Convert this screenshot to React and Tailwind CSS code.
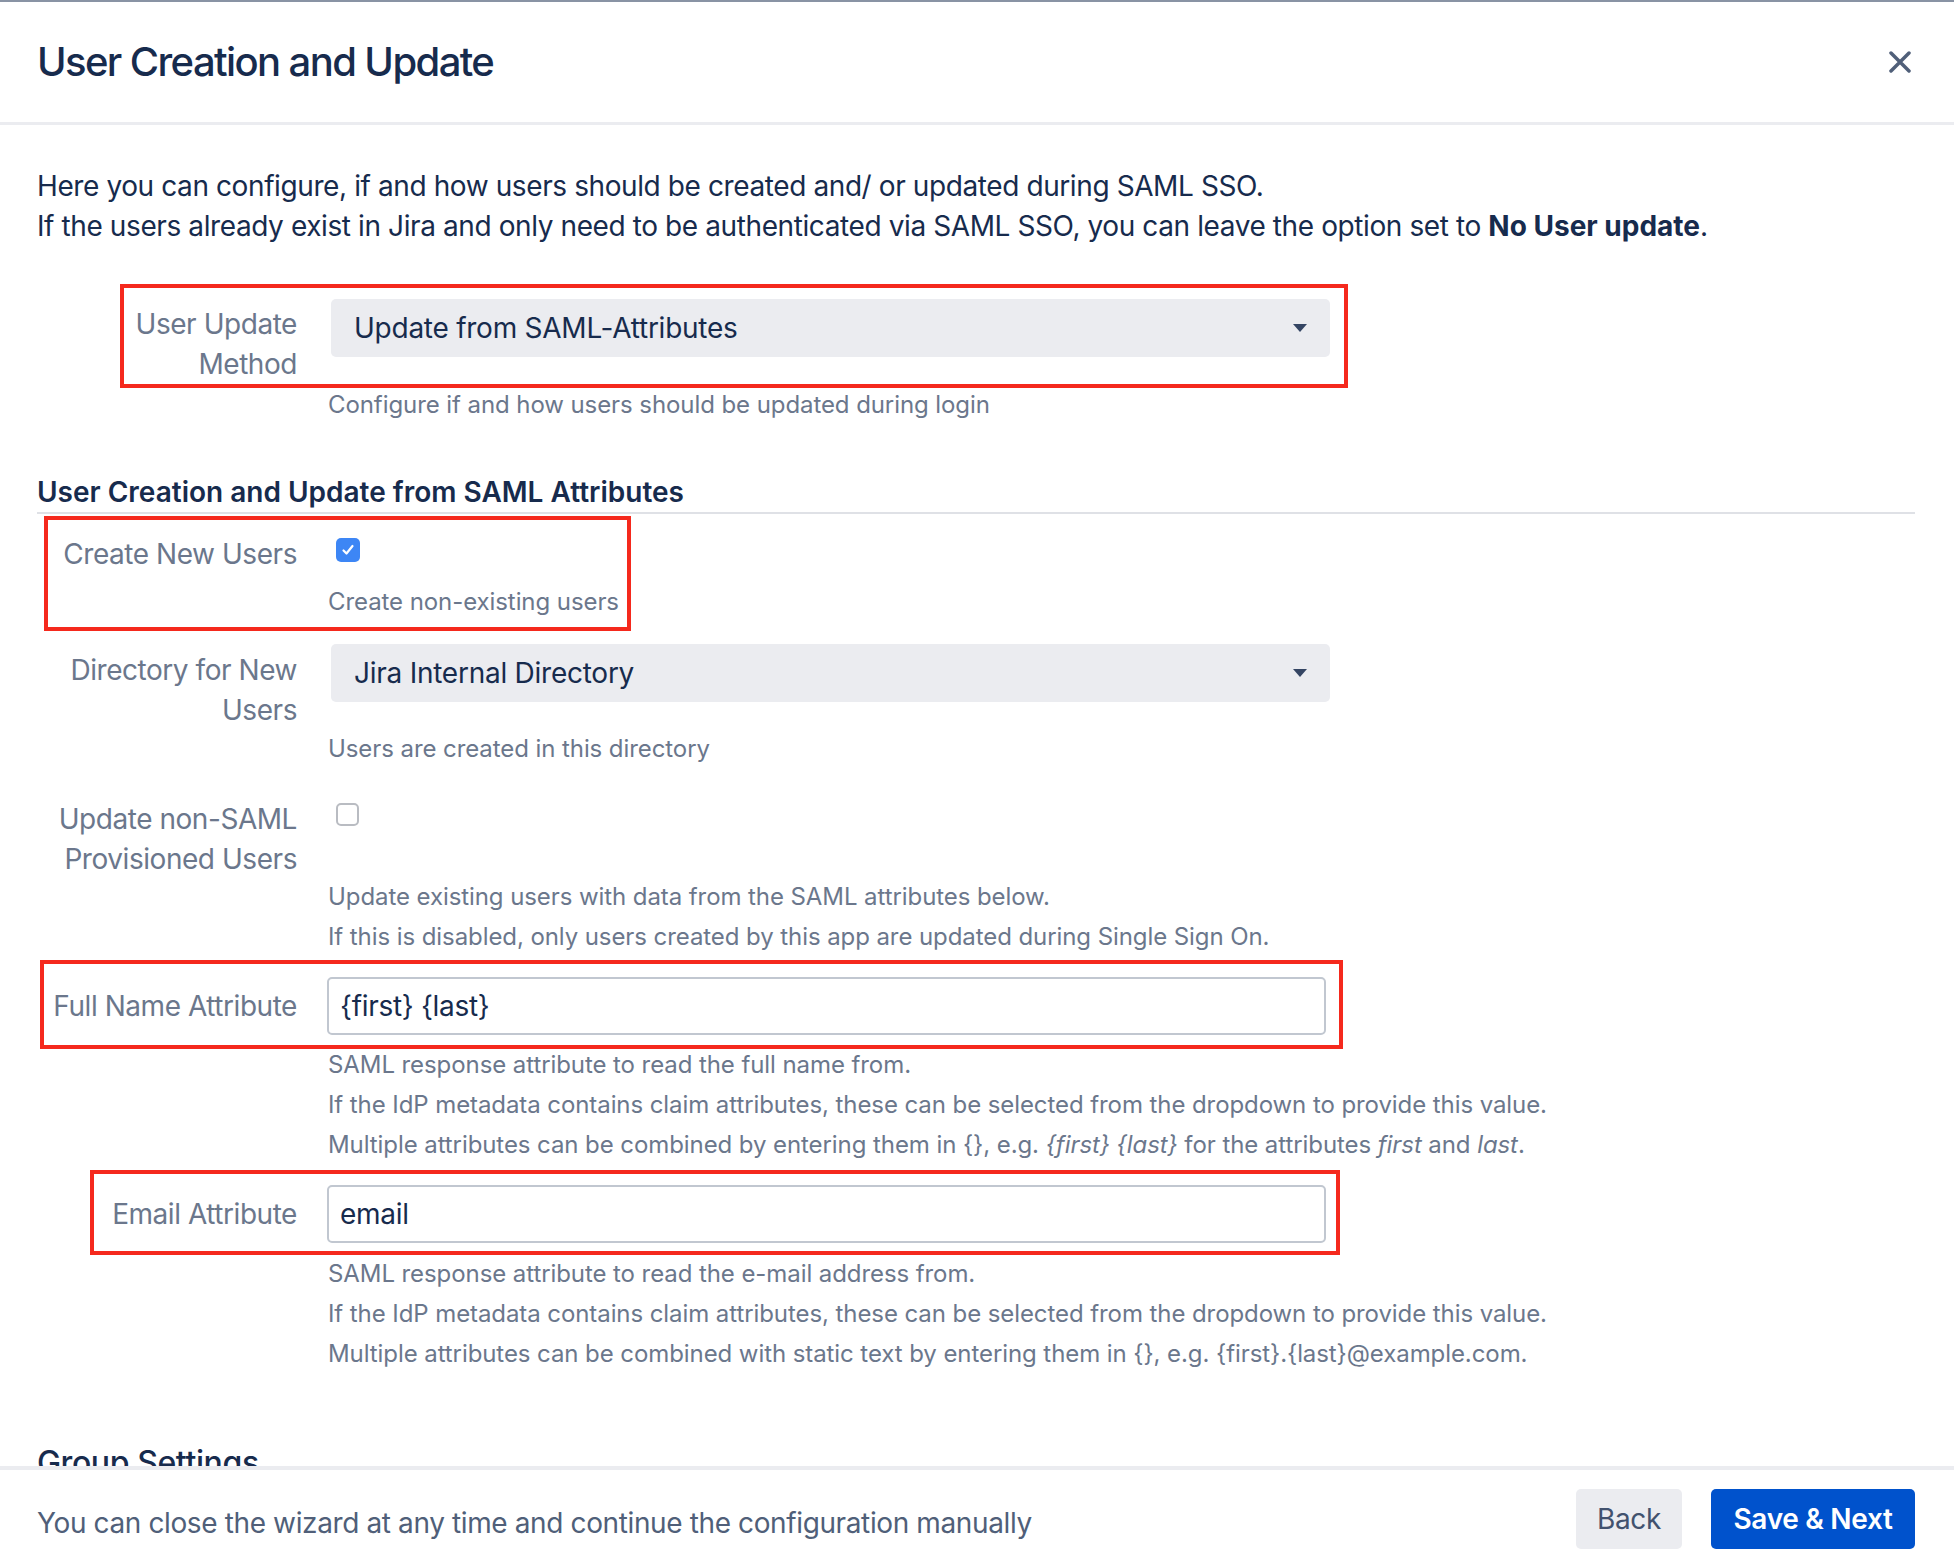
import React from "react";

const FONT = { fontFamily: "Inter, 'Noto Sans', sans-serif" };

const Caret = () => (
  <svg width="14" height="8" viewBox="0 0 14 8" className="shrink-0">
    <path d="M0 0 L14 0 L7 8 Z" fill="#344563" />
  </svg>
);

const CloseIcon = () => (
  <svg width="22" height="22" viewBox="0 0 22 22">
    <path d="M2 2 L20 20 M20 2 L2 20" stroke="#505f79" strokeWidth="3.5" strokeLinecap="round" />
  </svg>
);

const Select = ({ value }) => (
  <div className="ml-[3px] flex h-[58px] w-[999px] items-center justify-between rounded-[5px] bg-[#ebecf0] pl-[23px] pr-[23px] text-[28px] tracking-[-0.25px] text-[#172b4d]">
    <span>{value}</span>
    <Caret />
  </div>
);

const TextInput = ({ value }) => (
  <div className="-ml-[1px] flex h-[58px] w-[999px] items-center rounded-[5px] border-2 border-[#c1c7d0] bg-white pl-[11px] text-[28px] tracking-[-0.3px] text-[#172b4d]">
    {value}
  </div>
);

const Checkbox = ({ checked }) =>
  checked ? (
    <div className="ml-[8px] flex h-[24px] w-[24px] items-center justify-center rounded-[5px] bg-[#3d86f5]">
      <svg width="16" height="16" viewBox="0 0 16 16">
        <path d="M3.5 8.5 L6.5 11.5 L12.5 4" stroke="white" strokeWidth="2.2" fill="none" strokeLinecap="round" strokeLinejoin="round" />
      </svg>
    </div>
  ) : (
    <div className="ml-[8px] h-[23px] w-[23px] rounded-[5px] border-2 border-[#b9bcc2] bg-white" />
  );

const Help = ({ children, className = "" }) => (
  <div className={`text-[24px] leading-[40px] tracking-[-0.08px] text-[#6b778c] ${className}`}>{children}</div>
);

const Label = ({ children, className = "" }) => (
  <div className={`text-right text-[28px] leading-[40px] tracking-[-0.45px] text-[#6b778c] ${className}`}>{children}</div>
);

// annotation frame drawn over the screenshot
const RedBox = ({ className }) => (
  <div className={`pointer-events-none absolute border-4 border-[#f5291d] ${className}`} />
);

const Row = ({ children, className = "" }) => (
  <div className={`relative grid grid-cols-[260px_1fr] gap-x-[31px] ${className}`}>{children}</div>
);

export default function App() {
  return (
    <div style={FONT} className="flex h-[1568px] w-[1954px] flex-col overflow-hidden border-t-2 border-[#8993a4] bg-white">
      <header className="flex h-[123px] shrink-0 items-center justify-between border-b-[3px] border-[#ebecf0] pl-[37px] pr-[43px]">
        <h1 className="text-[40px] font-medium leading-[48px] tracking-[-1.6px] text-[#172b4d]">User Creation and Update</h1>
        <CloseIcon />
      </header>

      <main className="flex-1 overflow-hidden px-[39px] pl-[37px]">
        <div className="mt-[41px] text-[28px] leading-[40px] tracking-[-0.4px] text-[#172b4d]">
          <p>Here you can configure, if and how users should be created and/ or updated during SAML SSO.</p>
          <p>
            If the users already exist in Jira and only need to be authenticated via SAML SSO, you can leave the option set to{" "}
            <b className="font-bold tracking-normal">No User update</b>.
          </p>
        </div>

        <Row className="mt-[53px]">
          <RedBox className="-top-[15px] left-[83px] h-[104px] w-[1228px]" />
          <Label className="pt-[5px]">
            User Update
            <br />
            Method
          </Label>
          <div>
            <Select value="Update from SAML-Attributes" />
            <Help className="mt-[28px]">Configure if and how users should be updated during login</Help>
          </div>
        </Row>

        <h2 className="mt-[47px] border-b-2 border-[#dfe1e6] text-[28px] font-semibold leading-[40px] text-[#172b4d]">
          User Creation and Update from SAML Attributes
        </h2>

        <Row>
          <RedBox className="top-[2px] left-[7px] h-[115px] w-[587px]" />
          <Label className="pt-[20px]">Create New Users</Label>
          <div className="pt-[24px]">
            <Checkbox checked />
            <Help className="mt-[20px]">Create non-existing users</Help>
          </div>
        </Row>

        <Row className="mt-[22px]">
          <Label className="pt-[6px]">
            Directory for New
            <br />
            Users
          </Label>
          <div>
            <Select value="Jira Internal Directory" />
            <Help className="mt-[27px]">Users are created in this directory</Help>
          </div>
        </Row>

        <Row className="mt-[30px]">
          <Label>
            Update non-SAML
            <br />
            Provisioned Users
          </Label>
          <div className="pt-[4px]">
            <Checkbox />
            <Help className="mt-[51px]">
              Update existing users with data from the SAML attributes below.
              <br />
              If this is disabled, only users created by this app are updated during Single Sign On.
            </Help>
          </div>
        </Row>

        <Row className="mt-[20px]">
          <RedBox className="-top-[17px] left-[3px] h-[89px] w-[1303px]" />
          <Label className="pt-[9px]">Full Name Attribute</Label>
          <div>
            <TextInput value="{first} {last}" />
            <Help className="mt-[10px]">
              SAML response attribute to read the full name from.
              <br />
              If the IdP metadata contains claim attributes, these can be selected from the dropdown to provide this value.
              <br />
              Multiple attributes can be combined by entering them in {"{}"}, e.g. <i>{"{first} {last}"}</i> for the attributes{" "}
              <i>first</i> and <i>last</i>.
            </Help>
          </div>
        </Row>

        <Row className="mt-[20px]">
          <RedBox className="-top-[15px] left-[53px] h-[85px] w-[1250px]" />
          <Label className="pt-[9px]">Email Attribute</Label>
          <div>
            <TextInput value="email" />
            <Help className="mt-[11px]">
              SAML response attribute to read the e-mail address from.
              <br />
              If the IdP metadata contains claim attributes, these can be selected from the dropdown to provide this value.
              <br />
              Multiple attributes can be combined with static text by entering them in {"{}"}, e.g. {"{first}.{last}@example.com"}.
            </Help>
          </div>
        </Row>

        <h2 className="mt-[69px] text-[32px] font-medium leading-[40px] tracking-[-0.4px] text-[#172b4d]">Group Settings</h2>
      </main>

      <footer className="flex h-[102px] shrink-0 items-center justify-between border-t-4 border-[#ebecf0] pl-[37px] pr-[39px]">
        <span className="mt-[8px] text-[28px] tracking-[-0.38px] text-[#505f79]">You can close the wizard at any time and continue the configuration manually</span>
        <div className="flex gap-[29px]">
          <button className="h-[60px] w-[106px] rounded-[5px] bg-[#ebecf0] text-[28px] tracking-[-0.3px] text-[#42526e]">Back</button>
          <button className="h-[60px] w-[204px] rounded-[5px] bg-[#0052cc] text-[28px] font-semibold tracking-[-0.3px] text-white">Save &amp; Next</button>
        </div>
      </footer>
    </div>
  );
}
